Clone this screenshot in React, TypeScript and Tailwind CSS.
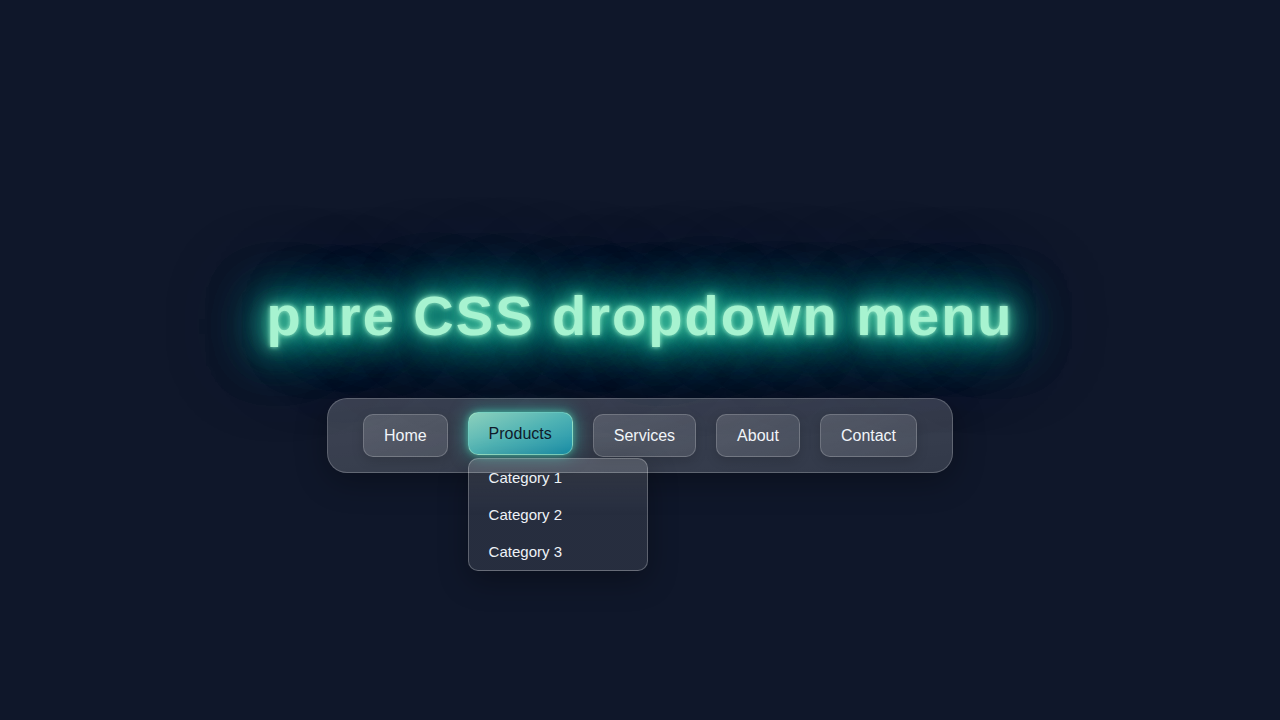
import React from "react";

const items = ["Home", "Products", "Services", "About", "Contact"];

export default function App() {
  return (
    <div
      className="min-h-screen w-full bg-[#0f172a] flex flex-col items-center pt-[284px]"
      style={{ fontFamily: '"Liberation Sans", Arial, sans-serif' }}
    >
      <h1 className="text-[56px] leading-[64px] font-bold tracking-[2px] text-[#a7f3d0] text-center [text-shadow:0_0_4px_rgba(167,243,208,0.9),0_0_12px_rgba(110,231,183,0.75),0_0_24px_rgba(52,211,153,0.6),0_0_36px_rgba(45,212,191,0.7),0_0_36px_rgba(20,184,166,0.7),0_0_60px_rgba(20,184,166,0.85),0_0_60px_rgba(13,148,136,0.85),0_0_60px_rgba(13,148,136,0.7),0_0_100px_rgba(8,145,178,0.55)]">
        pure CSS dropdown menu
      </h1>
      <nav className="mt-[50px] relative rounded-[20px] border border-white/20 bg-white/15 bg-gradient-to-br from-white/5 to-transparent px-[35px] py-[15px] shadow-[0_8px_32px_rgba(0,0,0,0.3)]">
        <ul className="flex gap-5">
          {items.map((it) => {
            const active = it === "Products";
            return (
              <li key={it} className="relative">
                {active ? (
                  <span className="flex h-[43px] items-center -translate-y-[2px] rounded-[10px] border border-[#a7f3d0]/50 bg-gradient-to-br from-[#8ad0bc] via-[#4fb3b4] to-[#1691aa] px-5 text-[16px] text-[#0f1a2a] shadow-[0_0_18px_rgba(45,212,191,0.6),0_0_6px_rgba(110,231,183,0.5)]">
                    {it}
                  </span>
                ) : (
                  <span className="flex h-[43px] items-center rounded-[10px] border border-white/20 bg-white/10 bg-gradient-to-br from-white/5 to-transparent px-5 text-[16px] text-[#f1f5f9] shadow-[0_4px_12px_rgba(0,0,0,0.15)]">
                    {it}
                  </span>
                )}
                {active && (
                  <div className="absolute left-0 top-[calc(100%+1px)] z-10 w-[180px] overflow-hidden rounded-[10px] border border-white/25 bg-gradient-to-b from-white/[0.16] via-white/10 to-white/10 shadow-[0_10px_30px_rgba(0,0,0,0.3)]">
                    {["Category 1", "Category 2", "Category 3"].map((c) => (
                      <div
                        key={c}
                        className="px-5 py-[10px] text-[15px] leading-[17px] text-[#eef2f7]"
                      >
                        {c}
                      </div>
                    ))}
                  </div>
                )}
              </li>
            );
          })}
        </ul>
      </nav>
    </div>
  );
}
